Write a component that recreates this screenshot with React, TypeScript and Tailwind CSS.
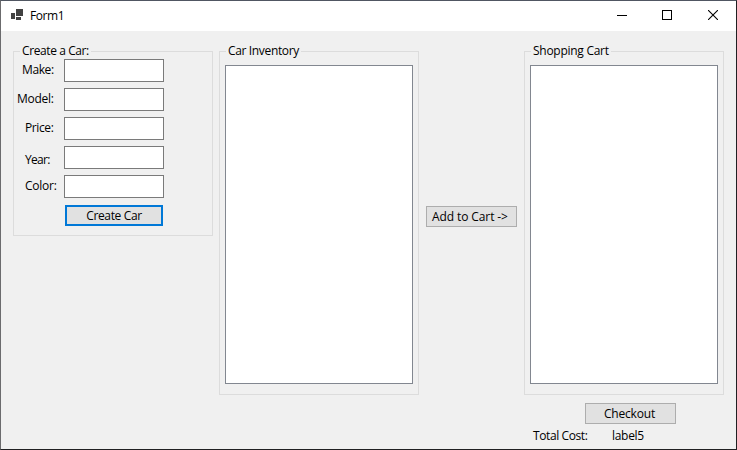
import type { ReactNode } from "react";

type GroupProps = { title: string; titleClass: string; className: string; children: ReactNode };

function GroupBox({ title, titleClass, className, children }: GroupProps) {
  return (
    <section className={`flex w-[200px] shrink-0 flex-col border border-[#dcdcdc] ${className}`}>
      <h2 className={`-mt-[9px] ml-[6px] h-4 whitespace-nowrap bg-[#f0f0f0] pl-[2px] leading-4 ${titleClass}`}>
        {title}
      </h2>
      {children}
    </section>
  );
}

const fields = [
  { label: "Make:", style: "pl-2 pt-[3px] tracking-[-0.4px]" },
  { label: "Model:", style: "pl-[3px] pt-[3px] tracking-[-0.25px]" },
  { label: "Price:", style: "pl-[11px] pt-[3px] tracking-[-0.4px]" },
  { label: "Year:", style: "pl-[11px] pt-[6px] tracking-[-0.7px]" },
  { label: "Color:", style: "pl-[11px] pt-[3px] tracking-[-0.25px]" },
];

function TitleBar() {
  return (
    <header className="flex h-[30px] shrink-0 items-start bg-white">
      <svg className="ml-[10px] mt-[8px]" width="12" height="12" shapeRendering="crispEdges" fill="#424242">
        <path d="M5 0h7v7H5zM0 4h4v6H0zM5 8h5v3H5z" />
      </svg>
      <h1 className="ml-[7px] mt-[7px] leading-4 tracking-[-0.4px]">Form1</h1>
      <div className="ml-auto flex">
        <button className="flex h-[29px] w-[45px] items-center justify-center" aria-label="Minimize">
          <svg width="10" height="10" shapeRendering="crispEdges">
            <path d="M0 4h10v1H0z" />
          </svg>
        </button>
        <button className="flex h-[28px] w-[46px] items-center justify-center" aria-label="Maximize">
          <svg width="10" height="10" shapeRendering="crispEdges">
            <path d="M.5.5h9v9h-9z" fill="none" stroke="#000" />
          </svg>
        </button>
        <button className="flex h-[28px] w-[46px] items-center justify-center" aria-label="Close">
          <svg width="10" height="10">
            <path d="M0 0l10 10M10 0L0 10" fill="none" stroke="#000" strokeWidth="1.1" />
          </svg>
        </button>
      </div>
    </header>
  );
}

export default function App() {
  return (
    <div className="flex h-[450px] w-[737px] flex-col overflow-hidden border border-l-[#6b6b6d] border-t-[#505662] border-r-[#202022] border-b-[#202022] bg-[#f0f0f0] font-['Open_Sans','Noto_Sans',sans-serif] text-[12px] text-black">
      <TitleBar />
      <main className="flex items-start pl-3 pt-5">
        <GroupBox title="Create a Car:" titleClass="w-[71px] tracking-[-0.4px]" className="h-[185px]">
          <div className="flex flex-col gap-[6px]">
            {fields.map((field) => (
              <label key={field.label} className="flex h-[23px]">
                <span className={`w-[50px] shrink-0 whitespace-nowrap leading-4 ${field.style}`}>{field.label}</span>
                <input className="h-[23px] w-[100px] border border-[#7a7a7a] bg-white px-1 outline-none" />
              </label>
            ))}
          </div>
          <button className="ml-[51px] mt-[7px] flex h-[21px] w-[98px] shrink-0 justify-center border-2 border-[#0078d7] bg-[#e1e1e1] pt-[1px] leading-4 tracking-[-0.35px]">
            Create Car
          </button>
        </GroupBox>
        <GroupBox title="Car Inventory" titleClass="w-[75px] tracking-[-0.35px]" className="ml-[6px] h-[344px]">
          <div className="ml-[5px] mt-[6px] h-[319px] w-[188px] shrink-0 border border-[#828790] bg-white" />
        </GroupBox>
        <button className="ml-[7px] mt-[155px] flex h-[21px] w-[91px] items-center whitespace-nowrap border border-[#adadad] bg-[#e1e1e1] pl-[5px] leading-4 tracking-[-0.1px]">
          Add to Cart -&gt;
        </button>
        <div className="ml-[7px] flex flex-col">
          <GroupBox title="Shopping Cart" titleClass="w-[80px] tracking-[-0.27px]" className="h-[344px]">
            <div className="ml-[5px] mt-[6px] h-[319px] w-[188px] shrink-0 border border-[#828790] bg-white" />
          </GroupBox>
          <button className="ml-[61px] mt-2 flex h-[21px] w-[91px] items-center justify-center border border-[#adadad] bg-[#e1e1e1] pr-[2px] leading-4 tracking-[-0.2px]">
            Checkout
          </button>
          <div className="mt-[4px] flex leading-4">
            <span className="ml-[9px] w-[79px] tracking-[-0.4px]">Total Cost:</span>
            <span className="tracking-[-0.3px]">label5</span>
          </div>
        </div>
      </main>
    </div>
  );
}
